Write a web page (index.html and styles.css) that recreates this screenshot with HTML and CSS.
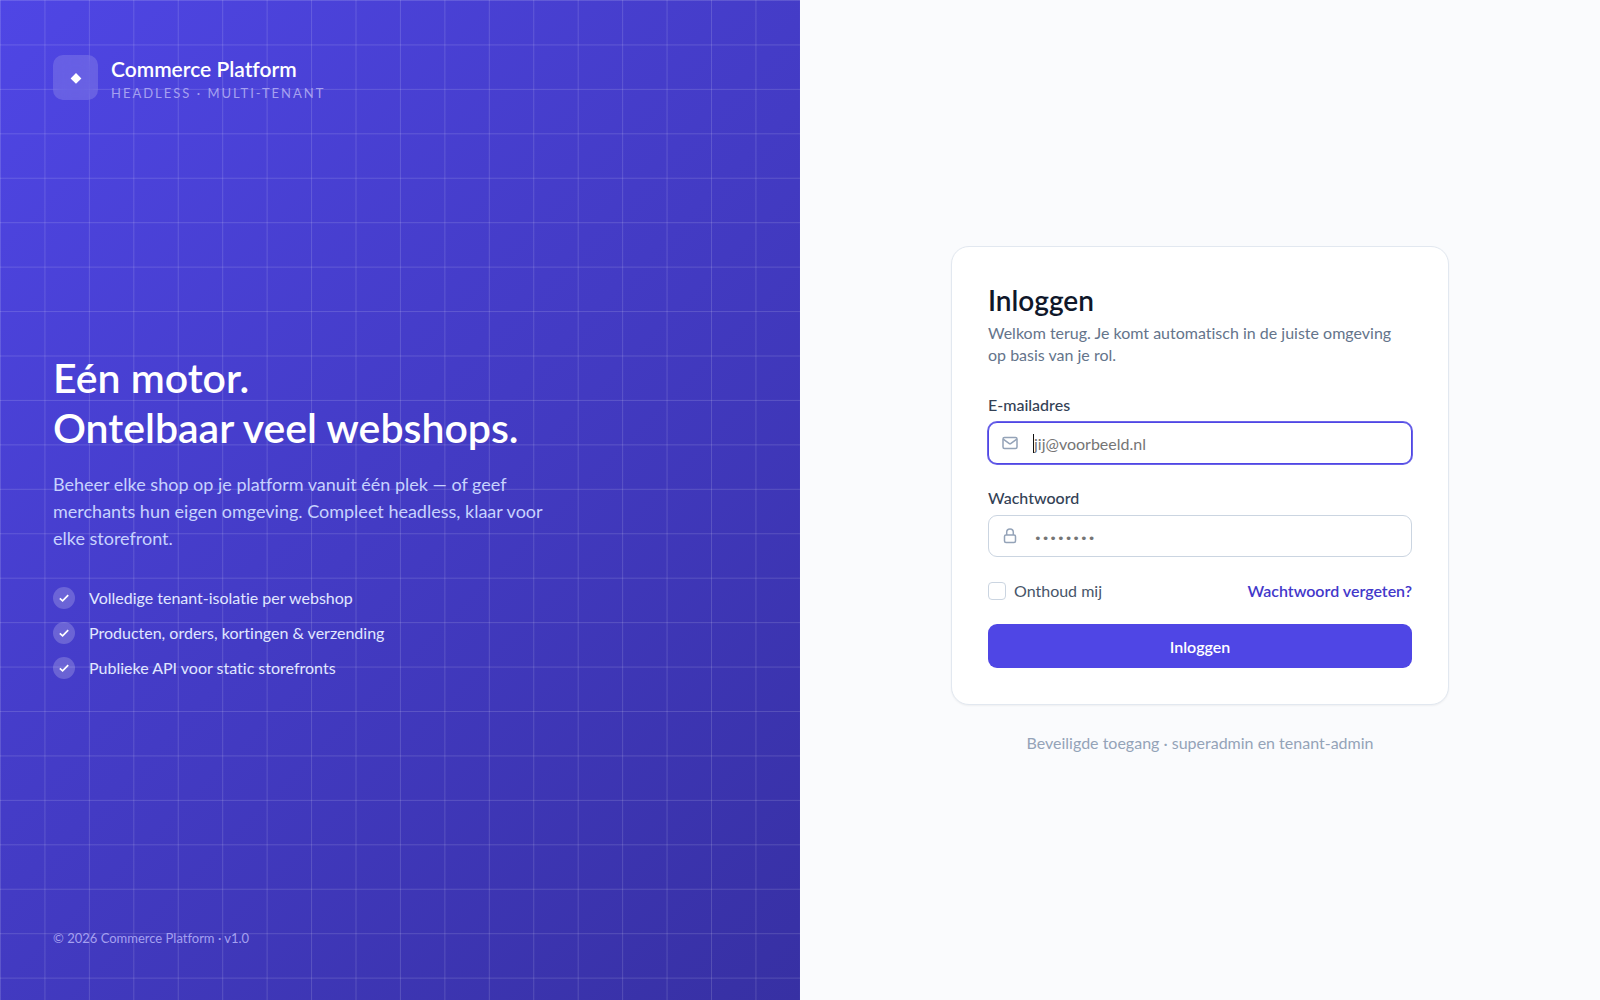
FILE: index.html
```
<!DOCTYPE html>
<html lang="nl">
<head>
    <meta charset="UTF-8">
    <meta name="viewport" content="width=device-width, initial-scale=1.0">
    <link rel="stylesheet" href="styles.css">
    <title>Inloggen · Commerce Platform</title>
</head>
<body>
    <div class="page">
        <!-- Merkpaneel -->
        <section class="brand-panel">
            <header class="brand">
                <span class="brand-logo">
                    <svg viewBox="0 0 12 12" width="12" height="12" aria-hidden="true"><path d="M6 1 11.400 6.400 6 11.800 .6 6.400z" fill="currentColor"/></svg>
                </span>
                <div>
                    <p class="brand-name">Commerce Platform</p>
                    <p class="brand-tag">HEADLESS · MULTI-TENANT</p>
                </div>
            </header>

            <div class="hero">
                <h1>Eén motor.<br>Ontelbaar veel webshops.</h1>
                <p class="hero-text">Beheer elke shop op je platform vanuit één plek — of geef merchants hun eigen omgeving. Compleet headless, klaar voor elke storefront.</p>
                <ul class="features">
                    <li>
                        <span class="check"><svg viewBox="0 0 20 20" width="14" height="14" aria-hidden="true"><path d="M4 10.500 8 14l8-8"/></svg></span>
                        Volledige tenant-isolatie per webshop
                    </li>
                    <li>
                        <span class="check"><svg viewBox="0 0 20 20" width="14" height="14" aria-hidden="true"><path d="M4 10.500 8 14l8-8"/></svg></span>
                        Producten, orders, kortingen &amp; verzending
                    </li>
                    <li>
                        <span class="check"><svg viewBox="0 0 20 20" width="14" height="14" aria-hidden="true"><path d="M4 10.500 8 14l8-8"/></svg></span>
                        Publieke API voor static storefronts
                    </li>
                </ul>
            </div>

            <footer class="copyright">© 2026 Commerce Platform · v1.0</footer>
        </section>

        <!-- Inlogformulier -->
        <main class="login">
            <div class="card">
                <h2>Inloggen</h2>
                <p class="intro">Welkom terug. Je komt automatisch in de juiste omgeving op basis van je rol.</p>

                <form>
                    <div class="field">
                        <label for="email">E-mailadres</label>
                        <div class="input-wrap">
                            <svg viewBox="0 0 18 18" width="18" height="18" aria-hidden="true"><rect x="2" y="3.500" width="14" height="11" rx="1.500"/><path d="m2.200 5.200 5.800 4.200a1.700 1.700 0 0 0 2 0l5.800-4.200"/></svg>
                            <input type="email" id="email" placeholder="jij@voorbeeld.nl" autofocus>
                        </div>
                    </div>
                    <div class="field">
                        <label for="password">Wachtwoord</label>
                        <div class="input-wrap">
                            <svg viewBox="0 0 18 18" width="18" height="18" aria-hidden="true"><rect x="3.500" y="8" width="11" height="7.500" rx="1.500"/><path d="M5.700 8V5.300a3.300 3.300 0 0 1 6.600 0V8"/></svg>
                            <input type="password" id="password" placeholder="••••••••">
                        </div>
                    </div>
                    <div class="options">
                        <label class="remember"><input type="checkbox" id="remember"> Onthoud mij</label>
                        <a href="#">Wachtwoord vergeten?</a>
                    </div>
                    <button type="submit">Inloggen</button>
                </form>
            </div>
            <p class="note">Beveiligde toegang · superadmin en tenant-admin</p>
        </main>
    </div>
</body>
</html>
```
FILE: styles.css
```
* {
    box-sizing: border-box;
}

body {
    font-family: Lato, 'Liberation Sans', sans-serif;
    font-size: 16px;
    line-height: 22px;
    font-variant-ligatures: none;
    background-color: #fafbfd;
    margin: 0;
}

h1, h2, p, ul {
    margin: 0;
    padding: 0;
}

.page {
    display: grid;
    grid-template-columns: 1fr 1fr;
    min-height: 100vh;
}

/* Merkpaneel */
.brand-panel {
    display: flex;
    flex-direction: column;
    justify-content: space-between;
    padding: 53px;
    color: #fff;
    background-image:
        linear-gradient(rgba(255, 255, 255, 0.14) 1px, transparent 1px),
        linear-gradient(90deg, rgba(255, 255, 255, 0.14) 1px, transparent 1px),
        linear-gradient(135deg, #4f46e5, #3730a3);
    background-size: calc(100% / 18) calc(100% / 22.5), calc(100% / 18) calc(100% / 22.5), 100% 100%;
}

.brand {
    display: flex;
    align-items: center;
    gap: 13px;
}

.brand-logo {
    display: flex;
    align-items: center;
    justify-content: center;
    width: 45px;
    height: 45px;
    border-radius: 10px;
    background-color: rgba(255, 255, 255, 0.15);
    backdrop-filter: blur(8px);
}

.brand-name {
    font-size: 21px;
    line-height: 31px;
    font-weight: 600;
}

.brand-tag {
    font-size: 13px;
    line-height: 18px;
    letter-spacing: 2px;
    color: #a5a0f0;
}

.hero {
    max-width: 500px;
}

h1 {
    font-size: 41px;
    line-height: 50px;
    font-weight: 600;
}

.hero-text {
    margin-top: 18px;
    font-size: 18px;
    line-height: 27px;
    color: #c7d2fe;
}

.features {
    display: flex;
    flex-direction: column;
    gap: 13px;
    margin-top: 35px;
    list-style-type: none;
    color: #e0e7ff;
}

.features li {
    display: flex;
    align-items: center;
    gap: 14px;
}

.check {
    display: flex;
    align-items: center;
    justify-content: center;
    width: 22px;
    height: 22px;
    border-radius: 50%;
    background-color: rgba(255, 255, 255, 0.2);
}

.check svg {
    fill: none;
    stroke: #fff;
    stroke-width: 2.5;
}

.copyright {
    font-size: 13px;
    line-height: 18px;
    color: #a5a0f0;
}

/* Inlogformulier */
.login {
    display: flex;
    flex-direction: column;
    align-items: center;
    justify-content: center;
    padding: 24px;
}

.card {
    width: 100%;
    max-width: 498px;
    padding: 36px;
    border: 1px solid #e2e8f0;
    border-radius: 18px;
    background-color: #fff;
    box-shadow: 0 1px 2px rgba(0, 0, 0, 0.05);
}

h2 {
    font-size: 28px;
    line-height: 34px;
    font-weight: 600;
    color: #0f172a;
}

.intro {
    margin: 5px 0 28px;
    color: #64748b;
}

.field {
    margin-bottom: 23px;
}

.field label {
    display: block;
    margin-bottom: 6px;
    font-weight: 500;
    color: #334155;
}

.input-wrap {
    position: relative;
}

.input-wrap svg {
    position: absolute;
    left: 13px;
    top: 12px;
    fill: none;
    stroke: #94a3b8;
    stroke-width: 1.5;
}

.input-wrap input {
    display: block;
    width: 100%;
    height: 42px;
    padding: 0 12px 0 45px;
    border: 1px solid #cbd5e1;
    border-radius: 9px;
    background-color: #fff;
    font-family: inherit;
    font-size: 16px;
}

.input-wrap input:focus {
    outline: none;
    border-color: #4f46e5;
    box-shadow: 0 0 0 1px #6b64e8;
}

#password::placeholder {
    font-family: 'DejaVu Sans', sans-serif;
    font-size: 13px;
}

/* Vaste cursor zolang het veld leeg is */
.input-wrap input:focus:placeholder-shown {
    caret-color: transparent;
}

.input-wrap:has(input:focus:placeholder-shown)::after {
    content: "";
    position: absolute;
    left: 45px;
    top: 12px;
    width: 1px;
    height: 19px;
    background-color: #111;
}

.options {
    display: flex;
    align-items: center;
    justify-content: space-between;
    margin-bottom: 22px;
}

.remember {
    display: flex;
    align-items: center;
    gap: 8px;
    color: #475569;
}

.remember input {
    appearance: none;
    width: 18px;
    height: 18px;
    margin: 0;
    border: 1px solid #cbd5e1;
    border-radius: 4px;
    background-color: #fff;
}

.remember input:checked {
    border-color: #4f46e5;
    background-color: #4f46e5;
}

.options a {
    font-weight: 600;
    color: #4338ca;
    text-decoration: none;
}

button {
    display: block;
    width: 100%;
    height: 44px;
    border: none;
    border-radius: 9px;
    background-color: #4f46e5;
    color: #fff;
    font-family: inherit;
    font-size: 16px;
    font-weight: 600;
    cursor: pointer;
}

button:hover {
    background-color: #4338ca;
}

.note {
    margin-top: 27px;
    color: #94a3b8;
}

/* Eén kolom op smalle schermen */
@media (max-width: 900px) {
    .page {
        grid-template-columns: 1fr;
    }

    .brand-panel {
        gap: 48px;
    }
}
```
